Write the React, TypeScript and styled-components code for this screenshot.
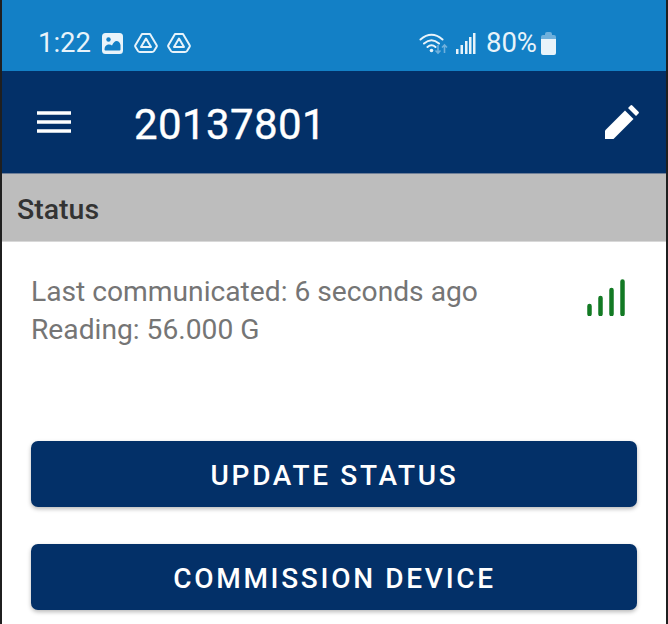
import * as React from 'react';
import styled, { createGlobalStyle } from 'styled-components';

const Global = createGlobalStyle`
  html, body {
    margin: 0;
    padding: 0;
    background: #1f1f1f;
    font-family: Roboto, "Liberation Sans", sans-serif;
  }
`;

const Screen = styled.div`
  width: 664px;
  height: 624px;
  margin-left: 2px;
  background: #fff;
  overflow: hidden;
`;

const StatusBar = styled.div`
  height: 71px;
  box-sizing: border-box;
  background: #1380c6;
  color: #e8f3fa;
  display: flex;
  align-items: center;
  justify-content: space-between;
  padding: 0 110px 0 36px;
`;

const StatusGroup = styled.div`
  display: flex;
  align-items: center;
  margin-top: 15px;
`;

const Clock = styled.span`
  font-size: 27.5px;
  font-weight: 400;
  line-height: 32px;
  margin-right: 11px;
`;

const Percent = styled.span`
  font-size: 27.5px;
  font-weight: 400;
  line-height: 32px;
  margin: 0 4px 0 10px;
`;

const StatusIcon = styled.svg<{ $gap?: number }>`
  display: block;
  margin-right: ${(p) => p.$gap ?? 0}px;
`;

const Toolbar = styled.header`
  height: 103px;
  box-sizing: border-box;
  background: #033068;
  color: #fff;
  display: flex;
  align-items: center;
  padding: 0 27px 0 35px;
  border-bottom: 1px solid #6f7f98;
`;

const Title = styled.h1`
  flex: 1;
  margin: 6px 0 0 63px;
  font-size: 42px;
  font-weight: 400;
  letter-spacing: 0.4px;
  line-height: 48px;
  -webkit-text-stroke: 0.4px #fff;
`;

const SectionHeader = styled.div`
  height: 68px;
  box-sizing: border-box;
  background: #bdbdbd;
  border-bottom: 1px solid #d8d8d8;
  color: #333;
  font-size: 28.5px;
  font-weight: 500;
  display: flex;
  align-items: center;
  padding: 3px 0 0 15px;
`;

const Content = styled.div`
  padding: 31px 29px 0;
`;

const Info = styled.div`
  display: flex;
  justify-content: space-between;
  align-items: flex-start;
  height: 168px;
  padding: 0 12px 0 0;
`;

const InfoLine = styled.div`
  color: #757575;
  font-size: 28.2px;
  line-height: 38px;
`;

const SignalIcon = styled.svg`
  display: block;
  margin-top: 6px;
`;

const ActionButton = styled.button`
  display: block;
  width: 100%;
  height: 66px;
  margin: 0 0 37px;
  padding: 3px 0 0 1px;
  border: 0;
  border-radius: 7px;
  background: #033068;
  color: #fff;
  font-family: inherit;
  font-size: 28px;
  font-weight: 500;
  letter-spacing: 2.7px;
  box-shadow: 0 2px 4px rgba(0, 0, 0, 0.28);
`;

const DriveIcon = () => (
  <StatusIcon width="24" height="22" viewBox="0 0 24 22" $gap={9}>
    <path d="M8 2h8l6.500 11q.7 1.200 0 2l-2.500 4q-.7 1-2 1H6q-1.300 0-2-1l-2.500-4q-.7-.8 0-2z" fill="none" stroke="currentColor" strokeWidth="2" strokeLinejoin="round" />
    <path d="M12 6.500 17 15H7z" fill="none" stroke="currentColor" strokeWidth="2" strokeLinejoin="round" />
  </StatusIcon>
);

const App = () => (
  <>
    <Global />
    <Screen>
      <StatusBar>
        <StatusGroup>
          <Clock>1:22</Clock>
          <StatusIcon width="21" height="21" viewBox="0 0 21 21" $gap={11}>
            <rect width="21" height="21" rx="3.500" fill="currentColor" />
            <circle cx="6.500" cy="6.500" r="2.200" fill="#1380c6" />
            <path d="M2.500 16.500q0-4 3.500-5 2.500-.5 4 1 2-4.500 4.500-4.500 3 0 4 4v4.500q0 1-1 1H3.500q-1 0-1-1z" fill="#1380c6" />
          </StatusIcon>
          <DriveIcon />
          <DriveIcon />
        </StatusGroup>
        <StatusGroup>
          <StatusIcon width="29" height="24" viewBox="0 0 29 24" $gap={8}>
            <path d="M1.500 8.500q11-9.500 22 0M5 12.500q7.500-6.500 15 0M8.500 16q4-3.500 8 0" fill="none" stroke="currentColor" strokeWidth="2" strokeLinecap="round" />
            <circle cx="12.500" cy="19.500" r="1.800" fill="currentColor" />
            <path d="M19 14v8m-2.500-2.500L19 22l2.500-2.500" fill="none" stroke="#6fb0dc" strokeWidth="1.600" />
            <path d="M25.500 22v-8M23 16.500l2.500-2.500 2.500 2.500" fill="none" stroke="#6fb0dc" strokeWidth="1.600" />
          </StatusIcon>
          <StatusIcon width="20" height="21" viewBox="0 0 20 21">
            <rect x="0" y="16" width="2.500" height="5" fill="currentColor" />
            <rect x="4.500" y="12" width="2.500" height="9" fill="currentColor" />
            <rect x="9" y="8" width="2.500" height="13" fill="currentColor" />
            <rect x="13" y="4" width="2.500" height="17" fill="currentColor" />
            <rect x="17" y="0" width="2.500" height="21" fill="currentColor" />
          </StatusIcon>
          <Percent>80%</Percent>
          <StatusIcon width="15" height="23" viewBox="0 0 15 23">
            <path d="M4 2q0-2 2-2h3q2 0 2 2v1h2q2 0 2 2v2H0V5q0-2 2-2h2z" fill="#6fb0dc" />
            <path d="M0 7h15v14q0 2-2 2H2q-2 0-2-2z" fill="#e8f3fa" />
          </StatusIcon>
        </StatusGroup>
      </StatusBar>
      <Toolbar>
        <svg width="34" height="22" viewBox="0 0 34 22">
          <path d="M0 2h34M0 11h34M0 20h34" stroke="#fff" strokeWidth="3.400" />
        </svg>
        <Title>20137801</Title>
        <svg width="34" height="34" viewBox="0 0 34 34">
          <path d="M0 34v-8.500L20 5.500l8.500 8.500L8.500 34z" fill="#fff" />
          <path d="M23 3 25.500.5q.9-.9 1.800 0l6.200 6.200q.9.9 0 1.800L31 11z" fill="#fff" />
        </svg>
      </Toolbar>
      <SectionHeader>Status</SectionHeader>
      <Content>
        <Info>
          <div>
            <InfoLine>Last communicated: 6 seconds ago</InfoLine>
            <InfoLine>Reading: 56.000 G</InfoLine>
          </div>
          <SignalIcon width="38" height="37" viewBox="0 0 38 37">
            <path d="M2.500 35v-8M13.500 35V19M24.500 35V11M35.500 35V2.500" stroke="#137a24" strokeWidth="4.500" strokeLinecap="round" />
          </SignalIcon>
        </Info>
        <ActionButton>UPDATE STATUS</ActionButton>
        <ActionButton>COMMISSION DEVICE</ActionButton>
      </Content>
    </Screen>
  </>
);

export default App;
